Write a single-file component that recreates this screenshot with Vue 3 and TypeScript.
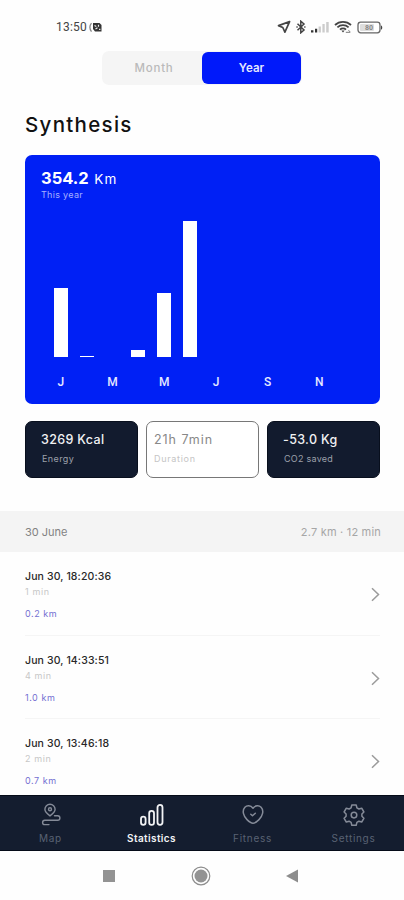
<script setup lang="ts">
interface Month { label: string; height: number }
interface Stat { value: string; label: string; kind: string }
interface Trip { date: string; time: string; duration: string; distance: string }

const months: Month[] = [
  { label: 'J', height: 69 },
  { label: '', height: 1.5 },
  { label: 'M', height: 0 },
  { label: '', height: 7 },
  { label: 'M', height: 64 },
  { label: '', height: 136 },
  { label: 'J', height: 0 },
  { label: '', height: 0 },
  { label: 'S', height: 0 },
  { label: '', height: 0 },
  { label: 'N', height: 0 },
  { label: '', height: 0 },
]
const stats: Stat[] = [
  { value: '3269 Kcal', label: 'Energy', kind: 'energy' },
  { value: '21h 7min', label: 'Duration', kind: 'duration' },
  { value: '-53.0 Kg', label: 'CO2 saved', kind: 'saved' },
]
const trips: Trip[] = [
  { date: 'Jun 30,', time: '18:20:36', duration: '1 min', distance: '0.2 km' },
  { date: 'Jun 30,', time: '14:33:51', duration: '4 min', distance: '1.0 km' },
  { date: 'Jun 30,', time: '13:46:18', duration: '2 min', distance: '0.7 km' },
]
</script>

<template>
  <div class="screen">
    <header class="status">
      <div class="clock">
        <span>13:50</span>
        <svg width="13" height="11" viewBox="0 0 13 11">
          <path d="M2.500 1.200C.6 3.500.6 7 2.500 9.600" fill="none" stroke="#888" stroke-width="1.300" />
          <path d="M4 1h6.500l2 2v6.500H6L4 7z" fill="#333" />
          <path d="M5.500 3.500l1.800 1M9.500 2.800v2M6.500 7l2-1.200M10 7.300h1.400" stroke="#eee" stroke-width="1.200" />
        </svg>
      </div>
      <div class="signals">
        <svg width="14" height="14" viewBox="0 0 14 14" fill="none" stroke="#444" stroke-width="1.700" stroke-linejoin="round">
          <path d="M12.600 1.600 1.500 5.600l4.300 1.900 2.100 4.700z" />
        </svg>
        <svg width="10" height="14" viewBox="0 0 10 14" fill="none" stroke="#444" stroke-width="1.500">
          <path d="M1.500 3.800 8 10 4.800 12.800V1.200L8 4 1.500 10.200" />
          <path d="M.4 7h1.300M8.200 7h1.300" />
        </svg>
        <svg width="18" height="14" viewBox="0 0 18 14">
          <path d="M0 10.300h2.400v2.300H0zM4 8.800h2.200v3.800H4z" fill="#333" />
          <path d="M7.600 6.500h2.300v6.100H7.600zM11.400 4h2.300v8.600h-2.300zM15.200 2h2.500v10.600h-2.500z" fill="#ccc" />
        </svg>
        <svg width="18" height="14" viewBox="0 0 18 14" fill="none" stroke="#444" stroke-width="1.800">
          <path d="M1 5c4.400-4.200 11.600-4.200 16 0M3.400 7.400c3.200-3 8-3 11.200 0M6 9.700c1.700-1.600 4.300-1.600 6 0" />
          <path d="m7.300 10.500 1.700 2 1.700-2z" fill="#444" stroke="none" />
          <path d="M11.800 12.300h4.300M14.400 10.400l2 1.500" stroke="#777" stroke-width="1" />
        </svg>
        <svg width="26" height="13" viewBox="0 0 26 13">
          <rect x="1" y="1.200" width="22" height="10.600" rx="2.700" fill="#fff" stroke="#666" stroke-width="1.300" />
          <rect x="3" y="3" width="14" height="7" rx="1" fill="#ddd" />
          <text x="12" y="9.300" text-anchor="middle" class="charge">80</text>
          <path d="M24 4.400c1.700.5 1.700 3.700 0 4.200z" fill="#444" />
        </svg>
      </div>
    </header>

    <div class="toggle">
      <button class="period">Month</button>
      <button class="period active">Year</button>
    </div>

    <h1 class="title">Synthesis</h1>

    <section class="chart">
      <div class="total"><b>354.2</b><span>Km</span></div>
      <div class="caption">This year</div>
      <div class="plot">
        <div v-for="(m, i) in months" :key="i" class="month">
          <div class="bar" :style="{ height: m.height + 'px' }"></div>
          <span class="letter">{{ m.label }}</span>
        </div>
      </div>
    </section>

    <section class="stats">
      <div v-for="s in stats" :key="s.label" class="stat" :class="s.kind">
        <div class="value">{{ s.value }}</div>
        <div class="label">{{ s.label }}</div>
      </div>
    </section>

    <div class="day">
      <span class="date">30 June</span>
      <span class="sum">2.7 km · 12 min</span>
    </div>

    <main class="trips">
      <article v-for="t in trips" :key="t.time" class="trip">
        <div>
          <div class="when">{{ t.date }} {{ t.time }}</div>
          <div class="duration-text">{{ t.duration }}</div>
          <div class="distance">{{ t.distance }}</div>
        </div>
        <svg class="chevron" width="9" height="15" viewBox="0 0 9 15" fill="none" stroke="#9b9b9b" stroke-width="1.500">
          <path d="m1 1.200 6.500 6.300L1 13.800" />
        </svg>
      </article>
    </main>

    <nav class="tabs">
      <div class="tab">
        <svg width="22" height="24" viewBox="0 0 22 24" fill="none" stroke="currentColor" stroke-width="1.400" stroke-linecap="round">
          <path d="M10 12.800C7 10.800 4.900 8.800 4.900 6.300a5.100 5.100 0 0 1 10.200 0c0 2.500-2.100 4.500-5.100 6.500z" />
          <circle cx="10" cy="6.200" r="1.500" />
          <path d="M14.500 12.800h3.200a2.200 2.200 0 0 1 0 4.400H4.800a2.200 2.200 0 0 0 0 4.400H9" />
        </svg>
        <span>Map</span>
      </div>
      <div class="tab current">
        <svg width="26" height="24" viewBox="0 0 26 24" fill="none" stroke="currentColor" stroke-width="1.800">
          <rect x="2" y="13.600" width="4.600" height="8.200" rx="2.300" />
          <rect x="10.200" y="7.800" width="4.800" height="14" rx="2.400" />
          <rect x="18.500" y="1.900" width="5" height="19.900" rx="2.500" />
        </svg>
        <span>Statistics</span>
      </div>
      <div class="tab">
        <svg width="22" height="24" viewBox="0 0 22 24" fill="none" stroke="currentColor" stroke-width="1.500" stroke-linecap="round" stroke-linejoin="round">
          <path d="M11 5.200C8.600 2.100 4.900 2.200 2.900 4.300c-3.100 3.300-1.500 8.700 2.100 12.300 2 2 4.400 3.600 6 3.600s4-1.600 6-3.600c3.600-3.600 5.200-9 2.100-12.300-2-2.100-5.700-2.200-8.100.9z" />
          <path d="m8.800 11.300 1.700 1.500 2.800-2.600" />
        </svg>
        <span>Fitness</span>
      </div>
      <div class="tab">
        <svg width="22" height="24" viewBox="0 0 22 24" fill="none" stroke="currentColor" stroke-width="1.500" stroke-linejoin="round">
          <path d="M8.800 2h4.400l.7 2.800 2 1.200 2.800-.8 2.200 3.800-2 2v2.300l2 2-2.200 3.700-2.800-.8-2 1.200-.7 2.800H8.800l-.7-2.800-2-1.200-2.800.8-2.200-3.700 2-2V11l-2-2 2.200-3.800 2.800.8 2-1.200z" />
          <circle cx="11" cy="12.100" r="2.800" />
        </svg>
        <span>Settings</span>
      </div>
    </nav>

    <footer class="system">
      <svg width="14" height="14" viewBox="0 0 14 14"><rect x="1" y="1" width="12" height="12" fill="#939393" /></svg>
      <svg width="20" height="20" viewBox="0 0 20 20">
        <circle cx="10" cy="10" r="8.800" fill="none" stroke="#8d8d8d" stroke-width="1.200" />
        <circle cx="10" cy="10" r="6.500" fill="#939393" />
      </svg>
      <svg width="14" height="14" viewBox="0 0 14 14"><path d="M13 .5v13L1 7z" fill="#8d8d8d" /></svg>
    </footer>
  </div>
</template>

<style>
body { margin: 0; background: #fefefe; }
</style>

<style scoped>
* { box-sizing: border-box; }
.screen { width: 404px; height: 900px; overflow: hidden; display: flex; flex-direction: column; background: #fefefe; font-family: Inter, sans-serif; color: #111; white-space: nowrap; }
.screen > * { flex-shrink: 0; }
svg { display: block; flex: none; }
.status { height: 51px; padding: 20px 21px 0 56px; display: flex; justify-content: space-between; align-items: flex-start; }
.clock { display: flex; align-items: center; gap: 2px; font: 12px/14px Roboto, sans-serif; letter-spacing: .2px; color: #444; }
.signals { display: flex; align-items: center; gap: 5px; }
.charge { font: bold 7px Roboto, sans-serif; fill: #888; }
.toggle { width: 200px; height: 34px; margin-left: 102px; padding: 1px 1px 1px 0; display: grid; grid-template-columns: 100px 99px; border-radius: 7px; background: #f5f5f5; }
.period { height: 32px; padding: 1px 0 0 4px; border: 0; border-radius: 6px; background: none; color: #bababa; font: 500 11.500px/31px Inter, sans-serif; letter-spacing: .8px; }
.period.active { padding-left: 0; background: #0019fa; color: #e5e8ff; font-weight: 600; letter-spacing: .1px; }
.title { margin: 26px 0 0 25px; height: 44px; font-size: 20.500px; line-height: 28px; font-weight: 500; letter-spacing: 1.300px; }
.chart { width: 355px; height: 249px; margin-left: 25px; padding: 13px 16px 0; display: flex; flex-direction: column; border-radius: 7px; background: #0020f5; color: #fff; }
.total { height: 21px; display: flex; align-items: baseline; gap: 5.500px; line-height: 21px; }
.total b { font-size: 16.500px; font-weight: 700; letter-spacing: 0; }
.total span { font-size: 13.500px; letter-spacing: 1.300px; }
.caption { height: 13px; font-size: 9px; line-height: 12px; letter-spacing: .3px; color: #a6b0ff; }
.plot { margin-left: 7px; display: flex; }
.month { width: 25.850px; height: 189px; display: flex; flex-direction: column; align-items: center; }
.bar { width: 14px; margin-top: auto; background: #fff; }
.letter { height: 34px; padding-top: 17px; font: 500 12px/16px Roboto, sans-serif; color: #e6e9ff; }
.stats { width: 355px; margin: 17px 0 33px 25px; display: grid; grid-template-columns: repeat(3, 113px); gap: 8px; }
.stat { height: 57px; padding: 9px 15px; border-radius: 7px; background: #121b2e; border: 1px solid #080f1d; color: #f0f1f3; }
.stat.duration { padding-left: 7px; background: #fff; border-color: #777; color: #888; }
.value { font-size: 12.500px; line-height: 18px; font-weight: 500; letter-spacing: .35px; }
.duration .value { font-weight: 400; letter-spacing: .95px; }
.label { margin: 3px 0 0 1px; font-size: 9px; line-height: 14px; letter-spacing: .4px; color: #9ca0aa; }
.saved .label { letter-spacing: .25px; }
.duration .label { margin-left: 0; color: #c5c5c5; letter-spacing: .7px; }
.day { height: 41px; padding: 1px 23px 0 25px; display: flex; justify-content: space-between; align-items: center; background: #f4f4f4; font-size: 11px; color: #828282; }
.sum { color: #a6a6a6; letter-spacing: .2px; }
.trips { height: 243px; overflow: hidden; padding: 0 24px 0 25px; }
.trip { height: 83.700px; padding-top: 17px; display: flex; justify-content: space-between; border-bottom: 1px solid #f5f5f5; }
.when { font-size: 10.500px; line-height: 16px; font-weight: 500; letter-spacing: .12px; color: #282828; }
.duration-text { font-size: 9px; line-height: 14px; letter-spacing: .6px; color: #c7c7c7; }
.distance { margin-top: 8px; font-size: 9px; line-height: 14px; letter-spacing: .55px; color: #7470d2; }
.chevron { margin-top: 18px; }
.tabs { height: 56px; padding-top: 7px; display: grid; grid-template-columns: repeat(4, 101px); background: #141d2f; border-top: 1px solid #050b18; border-bottom: 1px solid #050b18; }
.tab { display: flex; flex-direction: column; align-items: center; font-size: 10px; line-height: 14px; letter-spacing: .7px; color: #596273; }
.tab svg { margin-bottom: 4px; }
.tab:not(.current) svg { color: #858b98; }
.tab.current { color: #f2f3f5; font-weight: 600; letter-spacing: .4px; }
.system { height: 49px; padding: 0 105px 0 102px; display: flex; justify-content: space-between; align-items: center; }
</style>
